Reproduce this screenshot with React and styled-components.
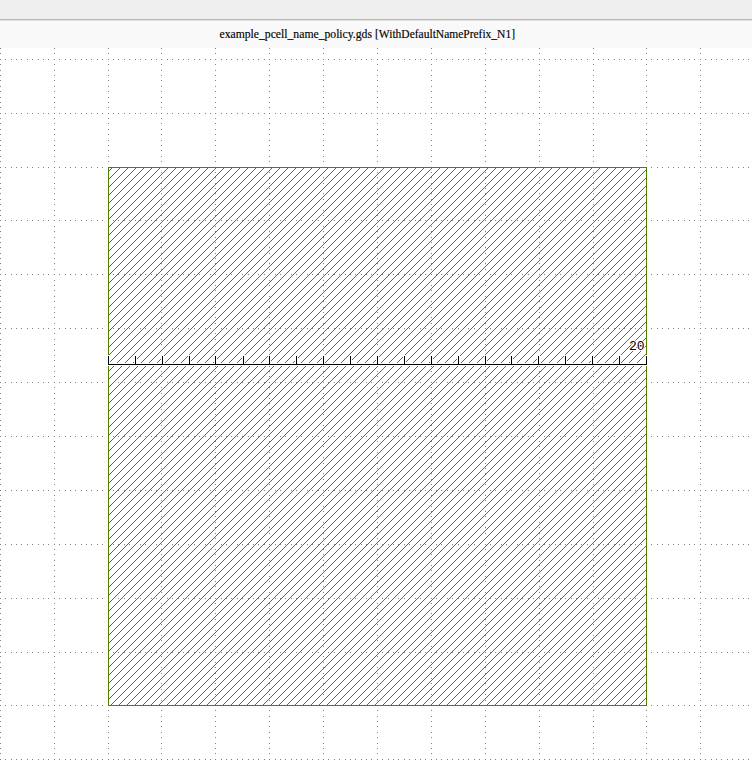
import React from "react";
import styled, { createGlobalStyle } from "styled-components";

const W = 752, TOP = 48, H = 714;
const L = 108, R = 646, T = 167, B = 705, RULER = 364;
const COLUMNS = [0, 54, 108, 161, 215, 269, 323, 377, 431, 485, 539, 593, 646, 700];
const ROWS = [59, 113, 167, 220, 274, 328, 382, 436, 490, 544, 598, 652, 705, 759];
const TICKS = [108, 135, 162, 189, 215, 243, 269, 296, 323, 350, 377, 404, 431, 458, 485, 511, 538, 565, 592, 619, 646];
const STEP = 5.384;

const Global = createGlobalStyle`
  body { margin: 0; background: #fff; overflow: hidden; }
`;
const Window = styled.main`
  display: flex;
  flex-direction: column;
  width: 752px;
  height: 762px;
  background: #fff;
`;
const Toolbar = styled.div`
  box-sizing: border-box;
  height: 20px;
  background: #efefef;
  border-bottom: 1px solid #b6b6b6;
`;
const TitleBar = styled.header`
  box-sizing: border-box;
  height: 28px;
  border-top: 1px solid #e2e2e2;
  background: #f9f9f9;
`;
const Title = styled.svg`
  display: block;
  width: 752px;
  height: 27px;
  font: 12px "Liberation Serif", serif;
  fill: #000;
  stroke: #000;
  stroke-width: 0.15px;
`;
const Canvas = styled.svg`
  display: block;
  width: 752px;
  height: 714px;
  shape-rendering: crispEdges;
`;
const Measure = styled.text`
  font: 13px "Liberation Mono", monospace;
  fill: #000;
  stroke: #fff;
  stroke-width: 2px;
  paint-order: stroke;
`;

const pixel = (x, y) => `M${x} ${y}h1v1h-1z`;

function minorStops(majors, offset, end) {
  return majors.flatMap((start, i) =>
    Array.from({ length: 9 }, (_, j) => {
      const k = i * 10 + j + 1;
      return Math.round(offset + STEP * k);
    })
  ).filter((v) => v < end);
}
const xStops = [...COLUMNS, ...minorStops(COLUMNS, -0.05, W)];
const yStops = [48, 53, ...ROWS, ...minorStops(ROWS, 58.84, TOP + H)];
const grid =
  ROWS.map((y) => xStops.map((x) => pixel(x, y)).join("")).join("") +
  COLUMNS.map((x) => yStops.map((y) => pixel(x, y)).join("")).join("");

function hatchPath() {
  let d = "";
  for (let y = T + 1; y < B; y++) {
    const shift = (((7 - y - L - 1) % 8) + 8) % 8;
    for (let x = L + 1 + shift; x < R; x += 8) d += pixel(x, y);
  }
  return d;
}
const hatch = hatchPath();

export default function App() {
  return (
    <Window>
      <Global />
      <Toolbar />
      <TitleBar>
        <Title>
          <text x="219.5" y="17" textLength="152.5" lengthAdjust="spacingAndGlyphs">
            example_pcell_name_policy.gds
          </text>
          <text x="375" y="17" textLength="140" lengthAdjust="spacingAndGlyphs">
            [WithDefaultNamePrefix_N1]
          </text>
        </Title>
      </TitleBar>
      <Canvas viewBox={`0 ${TOP} ${W} ${H}`}>
        <path d={grid} fill="#808080" />
        <path d={hatch} fill="#508000" />
        <rect x={L + 0.5} y={T + 0.5} width={R - L} height={B - T} fill="none" stroke="#508000" />
        <rect x={L - 1} y={RULER - 1} width={R - L + 3} height="3" fill="#fff" />
        {TICKS.map((x) => (
          <g key={x}>
            <rect x={x - 1} y={RULER - 9} width="3" height="9" fill="#fff" />
            <rect x={x} y={RULER - 8} width="1" height="9" fill="#000" />
          </g>
        ))}
        <rect x={L} y={RULER} width={R - L + 1} height="1" fill="#000" />
        <Measure x="629" y="349.5">20</Measure>
      </Canvas>
    </Window>
  );
}
